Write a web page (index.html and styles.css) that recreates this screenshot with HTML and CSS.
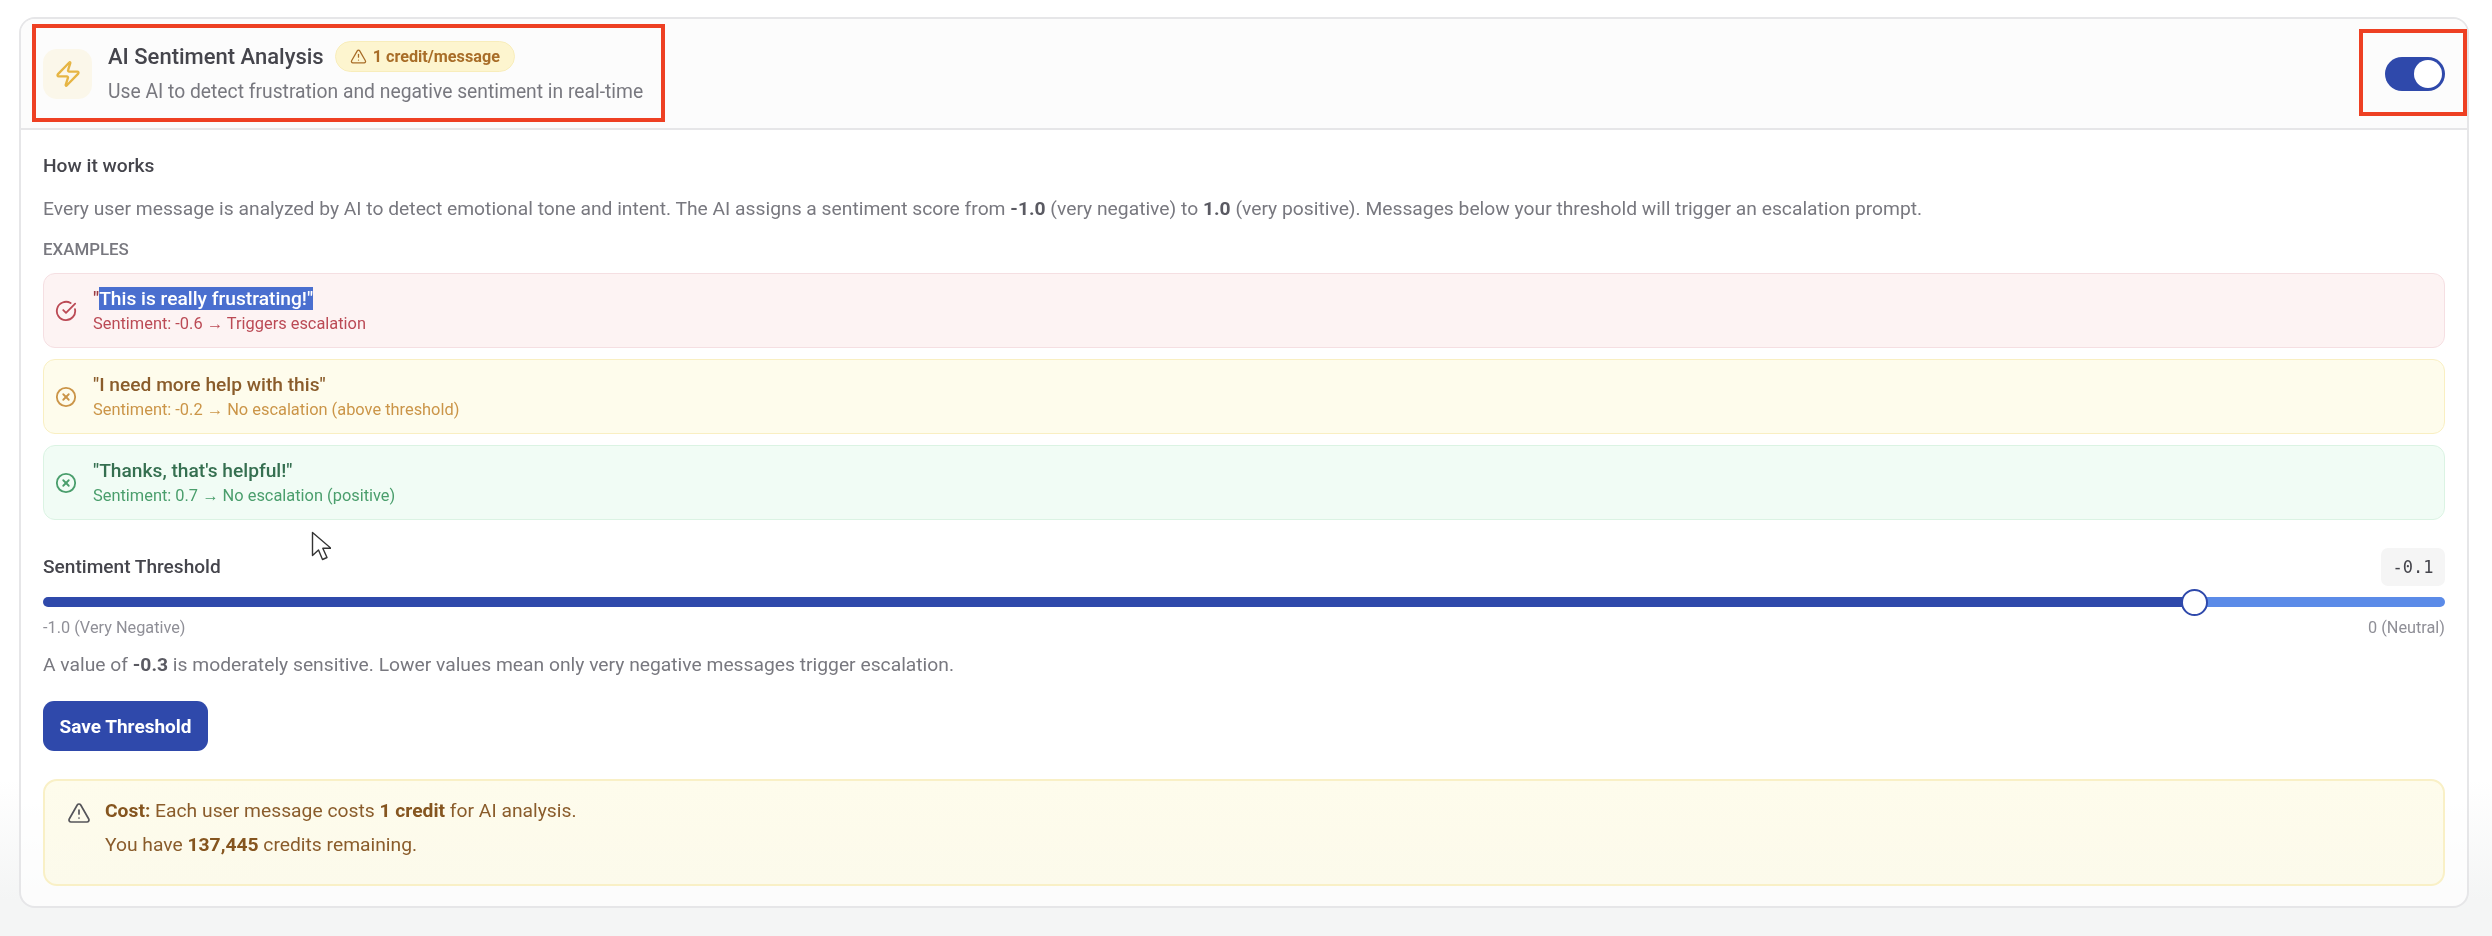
FILE: index.html
```html
<!DOCTYPE html>
<html lang="en">
<head>
<meta charset="utf-8">
<title>AI Sentiment Analysis</title>
<link rel="stylesheet" href="styles.css">
</head>
<body>
<main class="card">
  <header class="card-head">
    <div class="head-left">
      <span class="bolt-box">
        <svg class="bolt" viewBox="0 0 24 24"><path d="M4 14a1 1 0 0 1-.78-1.63l9.9-10.2a.5.5 0 0 1 .86.46l-1.92 6.02A1 1 0 0 0 13 10h7a1 1 0 0 1 .78 1.63l-9.9 10.2a.5.5 0 0 1-.86-.46l1.92-6.02A1 1 0 0 0 11 14z"/></svg>
      </span>
      <div class="head-text">
        <div class="title-row">
          <h1 class="title">AI Sentiment Analysis</h1>
          <span class="badge">
            <svg class="badge-icon" viewBox="0 0 24 24"><path d="m21.73 18-8-14a2 2 0 0 0-3.48 0l-8 14A2 2 0 0 0 4 21h16a2 2 0 0 0 1.73-3"/><path d="M12 9v4"/><path d="M12 17h.01"/></svg>
            1 credit/message
          </span>
        </div>
        <p class="subtitle">Use AI to detect frustration and negative sentiment in real-time</p>
      </div>
    </div>
    <button class="toggle" aria-label="Enabled"><span class="knob"></span></button>
  </header>

  <div class="card-body">
    <h2 class="how">How it works</h2>
    <p class="para">Every user message is analyzed by AI to detect emotional tone and intent. The AI assigns a sentiment score from <b>-1.0</b> (very negative) to <b>1.0</b> (very positive). Messages below your threshold will trigger an escalation prompt.</p>
    <div class="eyebrow">EXAMPLES</div>

    <div class="examples">
      <div class="example red">
        <svg class="ex-icon" viewBox="0 0 24 24"><path d="M21.801 10A10 10 0 1 1 17 3.335"/><path d="m9 11 3 3L22 4"/></svg>
        <div class="ex-text">
          <div class="ex-title">"<span class="selected">This is really frustrating!"</span></div>
          <div class="ex-sub">Sentiment: -0.6 → Triggers escalation</div>
        </div>
      </div>
      <div class="example yellow">
        <svg class="ex-icon" viewBox="0 0 24 24"><circle cx="12" cy="12" r="10"/><path d="m15 9-6 6"/><path d="m9 9 6 6"/></svg>
        <div class="ex-text">
          <div class="ex-title">"I need more help with this"</div>
          <div class="ex-sub">Sentiment: -0.2 → No escalation (above threshold)</div>
        </div>
      </div>
      <div class="example green">
        <svg class="ex-icon" viewBox="0 0 24 24"><circle cx="12" cy="12" r="10"/><path d="m15 9-6 6"/><path d="m9 9 6 6"/></svg>
        <div class="ex-text">
          <div class="ex-title">"Thanks, that's helpful!"</div>
          <div class="ex-sub">Sentiment: 0.7 → No escalation (positive)</div>
        </div>
      </div>
    </div>

    <div class="threshold-head">
      <span class="threshold-label">Sentiment Threshold</span>
      <code class="value">-0.1</code>
    </div>
    <div class="slider">
      <div class="track-fill"></div>
      <span class="thumb"></span>
      <div class="track-rest"></div>
    </div>
    <div class="scale"><span>-1.0 (Very Negative)</span><span>0 (Neutral)</span></div>
    <p class="para hint">A value of <b>-0.3</b> is moderately sensitive. Lower values mean only very negative messages trigger escalation.</p>
    <button class="save">Save Threshold</button>

    <div class="cost">
      <svg class="cost-icon" viewBox="0 0 24 24"><path d="m21.73 18-8-14a2 2 0 0 0-3.48 0l-8 14A2 2 0 0 0 4 21h16a2 2 0 0 0 1.73-3"/><path d="M12 9v4"/><path d="M12 17h.01"/></svg>
      <div class="cost-text">
        <p><b>Cost:</b> Each user message costs <b>1 credit</b> for AI analysis.</p>
        <p>You have <b>137,445</b> credits remaining.</p>
      </div>
    </div>
  </div>
</main>

<div class="mark mark-left"></div>
<div class="mark mark-right"></div>
<svg class="cursor" viewBox="0 0 20 30"><path d="M1.5 1.5v23l6-5.5 4 9.5 4.5-2-4.2-9.2h8.2z"/></svg>
</body>
</html>
```
FILE: styles.css
```css
* { box-sizing: border-box; }
html, body { height: 100%; }
body {
  margin: 0;
  padding: 17px 23px 0 19px;
  background: linear-gradient(#fff 0, #fff 780px, #f4f5f5 900px);
  font-family: Roboto, "Liberation Sans", sans-serif;
  color: #78787f;
  overflow: hidden;
}
p, h1, h2 { margin: 0; }
b { font-weight: 700; color: #5a5a62; }

.card {
  height: 891px;
  border: 2px solid #e6e6e8;
  border-radius: 16px;
  background: rgba(255,255,255,.7);
  overflow: hidden;
  filter: blur(.55px);
}
.card-head {
  height: 111px;
  padding: 0 22px;
  display: flex;
  align-items: center;
  justify-content: space-between;
  background: #fcfcfc;
  border-bottom: 2px solid #e6e6e8;
}
.head-left { display: flex; align-items: center; gap: 16px; }
.bolt-box {
  width: 49px; height: 50px;
  border-radius: 14px;
  background: #fbf7ea;
  display: flex; align-items: center; justify-content: center;
}
.bolt { width: 28px; height: 28px; fill: none; stroke: #e6b544; stroke-width: 2; stroke-linejoin: round; stroke-linecap: round; }
.head-text { margin-top: -4px; }
.title-row { display: flex; align-items: center; gap: 11px; height: 32px; }
.title { font-size: 22px; font-weight: 500; color: #45454c; }
.badge {
  display: inline-flex; align-items: center; gap: 6px;
  height: 31px; padding: 0 14px;
  border: 1px solid #f8edbb;
  border-radius: 16px;
  background: #fdf5cf;
  color: #a86d28;
  font-size: 16.2px; font-weight: 700;
}
.badge-icon { width: 17px; height: 17px; fill: none; stroke: #a86d28; stroke-width: 1.8; stroke-linejoin: round; stroke-linecap: round; }
.subtitle { margin-top: 8px; font-size: 19.3px; color: #78787f; }
.toggle {
  width: 60px; height: 34px; padding: 3px;
  border: 0; border-radius: 17px;
  background: #2f49ab;
  display: flex; justify-content: flex-end;
}
.knob { width: 28px; height: 28px; border-radius: 50%; background: #fff; }

.card-body { padding: 24px 22px 0 22px; }
.how { font-size: 19.2px; font-weight: 500; color: #45454c; line-height: 24px; }
.para { margin-top: 19px; font-size: 19.28px; line-height: 24px; }
.eyebrow { margin-top: 18px; font-size: 16.9px; font-weight: 500; line-height: 20px; color: #78787f; }
.examples { margin-top: 14px; display: flex; flex-direction: column; gap: 11px; }
.example {
  height: 75px;
  padding: 0 0 0 11px;
  border: 1px solid;
  border-radius: 12px;
  display: flex; align-items: center; gap: 16px;
}
.ex-icon { width: 22px; height: 22px; flex: none; fill: none; stroke-width: 2; stroke-linecap: round; stroke-linejoin: round; stroke: currentColor; }
.ex-text { padding-bottom: 2px; }
.ex-title { font-size: 19.2px; font-weight: 500; line-height: 25px; margin-bottom: 3px; }
.ex-sub { font-size: 16.4px; line-height: 19px; }
.red { background: #fdf3f3; border-color: #f5dfe2; color: #bb4a55; }
.red .ex-title { color: #9a3a42; }
.selected { background: #4a6fcf; color: #fff; }
.yellow { background: #fefcec; border-color: #f9efc2; color: #cb9548; }
.yellow .ex-title { color: #8a5c2b; }
.green { background: #f1fcf5; border-color: #dbf3e3; color: #4a9e6c; }
.green .ex-title { color: #356f50; }

.threshold-head { margin-top: 28px; height: 38px; display: flex; justify-content: space-between; align-items: center; }
.threshold-label { font-size: 19.1px; font-weight: 500; color: #45454c; margin-top: -2px; }
.value {
  width: 64px; height: 38px;
  border-radius: 7px;
  background: #f5f5f5;
  color: #45454c;
  font-family: "DejaVu Sans Mono", monospace;
  font-size: 17px;
  display: flex; align-items: center; justify-content: center;
}
.slider { margin-top: 11px; height: 10px; display: flex; align-items: center; position: relative; }
.track-fill { width: 2151px; height: 10px; background: #2f49ab; border-radius: 5px 0 0 5px; }
.track-rest { flex: 1; height: 10px; background: #5b8be8; border-radius: 0 5px 5px 0; }
.thumb {
  width: 27px; height: 27px; flex: none;
  margin-left: -13px; margin-right: -13px;
  position: relative; z-index: 1;
  border: 2px solid #2f49ab; border-radius: 50%;
  background: #fff;
}
.scale { margin-top: 11px; display: flex; justify-content: space-between; font-size: 16.3px; line-height: 20px; color: #8f8f97; }
.hint { margin-top: 15px; }
.save {
  display: block;
  margin-top: 24px;
  width: 165px; height: 50px;
  border: 0; border-radius: 11px;
  background: #2f49ab;
  color: #fff;
  font: 700 19px Roboto, sans-serif;
}
.cost {
  margin-top: 28px;
  height: 107px;
  padding: 13px 22px;
  border: 2px solid #f9f0c6;
  border-radius: 14px;
  background: linear-gradient(#fefcec, #fcfaeb);
  display: flex; gap: 14px;
}
.cost-icon { width: 24px; height: 24px; flex: none; margin-top: 7px; fill: none; stroke: #55555a; stroke-width: 1.7; stroke-linejoin: round; stroke-linecap: round; }
.cost-text { font-size: 19.28px; line-height: 34px; color: #8a5c2b; }
.cost-text b { color: #85551f; }

.mark { position: absolute; border: 4px solid #ee4023; }
.mark-left { left: 32px; top: 24px; width: 633px; height: 98px; }
.mark-right { left: 2359px; top: 29px; width: 108px; height: 87px; }
.cursor { position: absolute; left: 311px; top: 531px; width: 20px; height: 30px; fill: #fff; stroke: #333; stroke-width: 1.4; stroke-linejoin: round; filter: blur(.4px); }
```
